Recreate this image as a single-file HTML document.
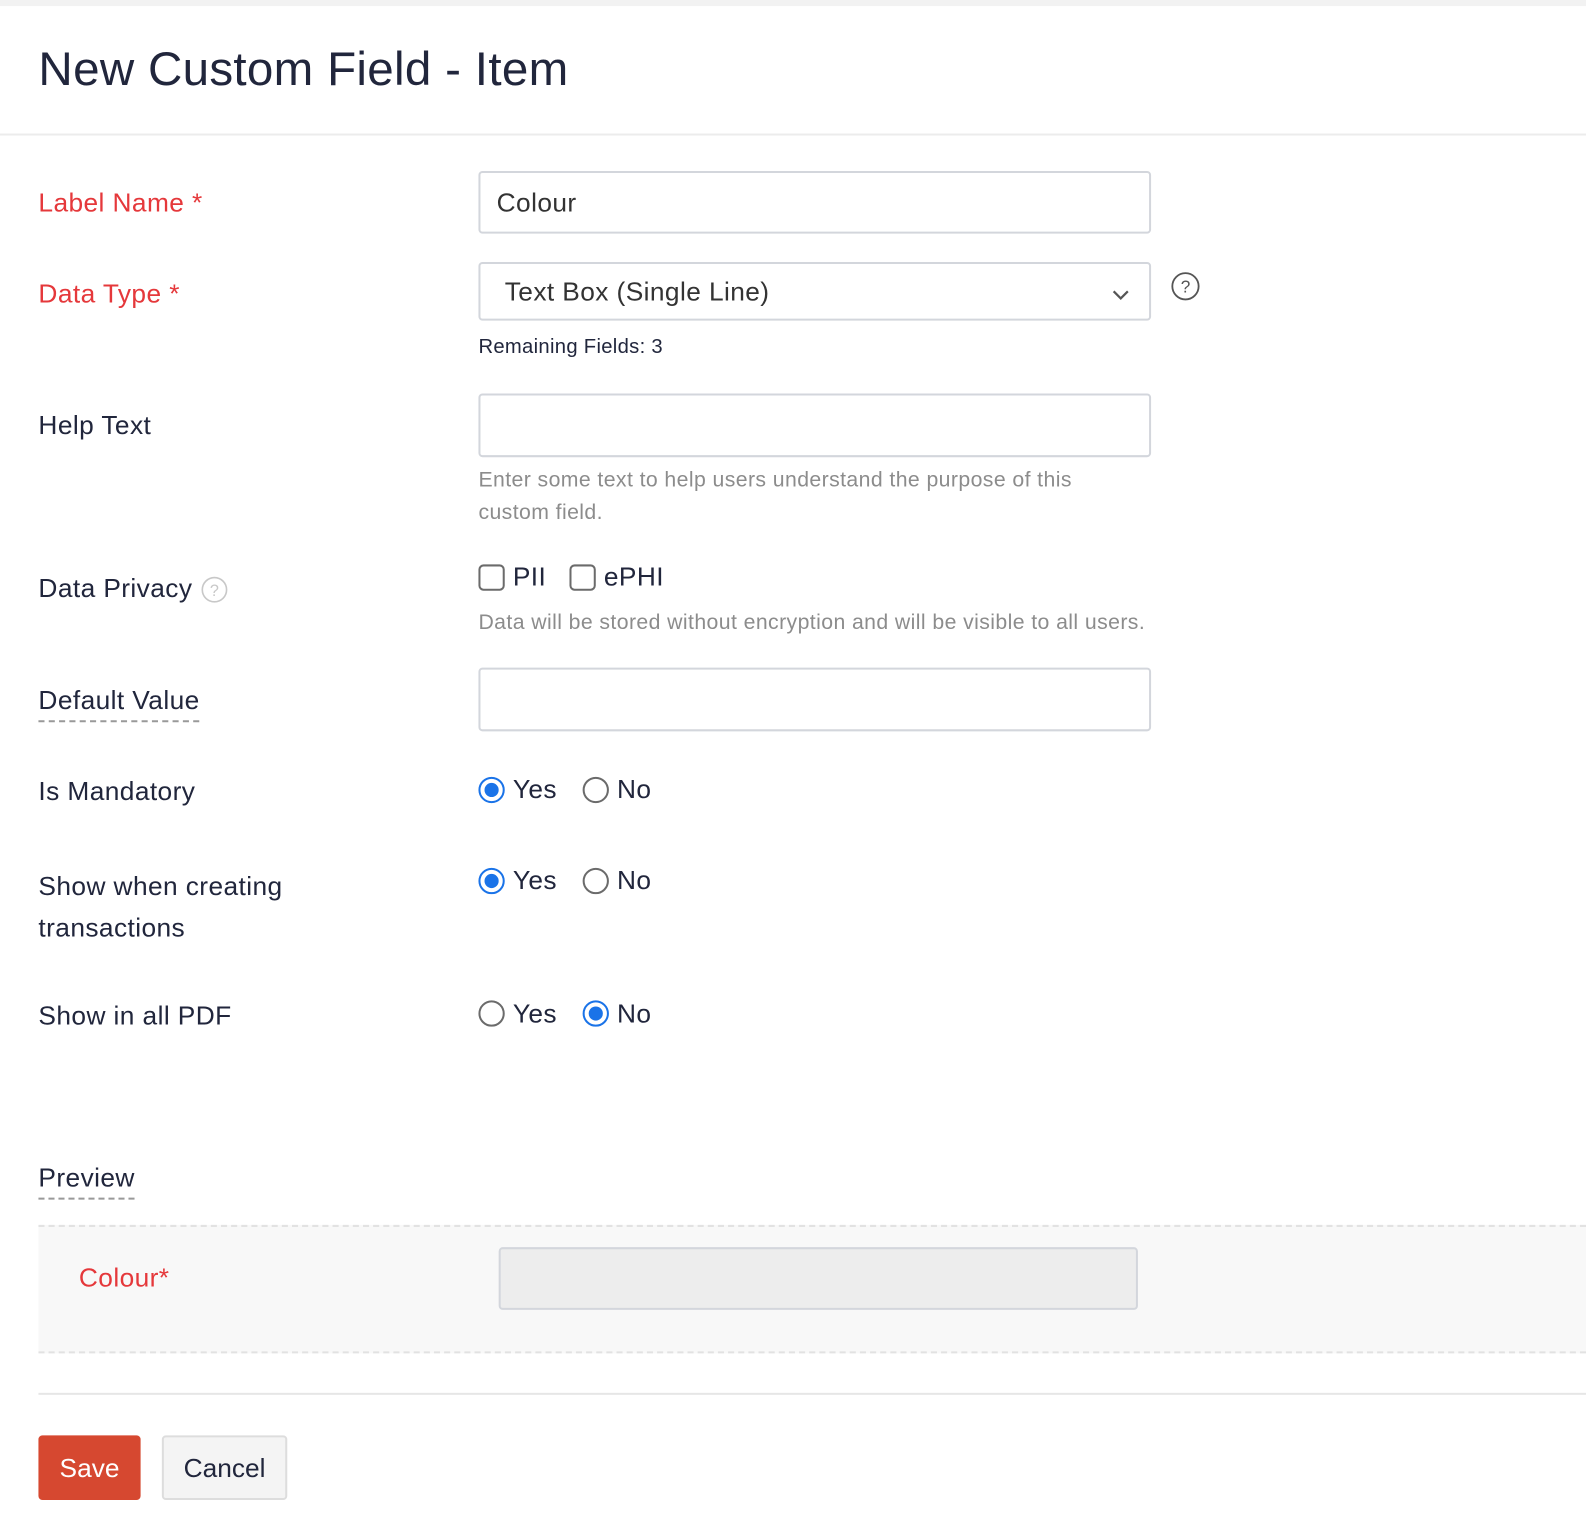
<!DOCTYPE html>
<html><head><meta charset="utf-8"><style>
*{box-sizing:border-box;margin:0;padding:0}
body{width:1586px;height:1530px;background:#fff;font-family:"Liberation Sans",sans-serif;color:#21263c;position:relative;overflow:hidden}
#w{position:absolute;left:0;top:0;width:1568px;height:1513px;transform:scale(1.0115);transform-origin:0 0}
.a{position:absolute;white-space:nowrap}
.lbl{font-size:26px;letter-spacing:0.4px;color:#21263c}
.req{color:#e5383b}
.inp{position:absolute;border:2px solid #d3d6dc;border-radius:4px;background:#fff}
.hint{font-size:21px;letter-spacing:0.4px;color:#8c8c8c}
.rad{position:absolute;width:26px;height:26px;border-radius:50%;border:2px solid #6b6b6b;background:#fff}
.rad.on{border-color:#1a73e8}
.rad.on::after{content:"";position:absolute;left:4px;top:4px;width:14px;height:14px;border-radius:50%;background:#1a73e8}
.cb{position:absolute;width:26px;height:26px;border:2px solid #6b6b6b;border-radius:5px}
.opt{font-size:26px;letter-spacing:0.4px;color:#21263c}
</style></head><body><div id="w">
<div class="a" style="left:0;top:0;width:1568px;height:6px;background:#f2f2f2"></div>
<div class="a" style="left:38px;top:40px;font-size:47px;color:#21263c;letter-spacing:0.3px">New Custom Field - Item</div>
<div class="a" style="left:0;top:132px;width:1568px;height:2px;background:#ececec"></div>

<div class="a lbl req" style="left:38px;top:185px">Label Name *</div>
<div class="inp" style="left:473px;top:169px;width:665px;height:62px"></div>
<div class="a" style="left:491px;top:185px;font-size:26px;letter-spacing:0.4px;color:#333">Colour</div>

<div class="a lbl req" style="left:38px;top:275px">Data Type *</div>
<div class="inp" style="left:473px;top:259px;width:665px;height:58px"></div>
<div class="a" style="left:499px;top:273px;font-size:26px;letter-spacing:0.4px;color:#333">Text Box (Single Line)</div>
<svg class="a" style="left:1098px;top:284px" width="20" height="14" viewBox="0 0 20 14"><path d="M3 4l7 7 7-7" fill="none" stroke="#555" stroke-width="2.2"/></svg>
<svg class="a" style="left:1157px;top:268px" width="30" height="30" viewBox="0 0 30 30"><circle cx="15" cy="15" r="13" fill="none" stroke="#555" stroke-width="1.8"/><text x="15" y="21" font-size="17" text-anchor="middle" fill="#555" font-family="Liberation Sans">?</text></svg>
<div class="a" style="left:473px;top:332px;font-size:20px;letter-spacing:0.3px;color:#21263c">Remaining Fields: 3</div>

<div class="a lbl" style="left:38px;top:405px">Help Text</div>
<div class="inp" style="left:473px;top:389px;width:665px;height:63px"></div>
<div class="a hint" style="left:473px;top:459px;line-height:32px;white-space:normal;width:620px">Enter some text to help users understand the purpose of this custom field.</div>

<div class="a lbl" style="left:38px;top:566px">Data Privacy</div>
<svg class="a" style="left:198px;top:569px" width="28" height="28" viewBox="0 0 28 28"><circle cx="14" cy="14" r="12" fill="none" stroke="#c8c8c8" stroke-width="1.6"/><text x="14" y="20" font-size="16" text-anchor="middle" fill="#c8c8c8" font-family="Liberation Sans">?</text></svg>
<div class="cb" style="left:473px;top:558px"></div>
<div class="a opt" style="left:507px;top:555px">PII</div>
<div class="cb" style="left:563px;top:558px"></div>
<div class="a opt" style="left:597px;top:555px">ePHI</div>
<div class="a hint" style="left:473px;top:604px">Data will be stored without encryption and will be visible to all users.</div>

<div class="a lbl" style="left:38px;top:677px;border-bottom:2px dashed #999;padding-bottom:4px">Default Value</div>
<div class="inp" style="left:473px;top:660px;width:665px;height:63px"></div>

<div class="a lbl" style="left:38px;top:767px">Is Mandatory</div>
<div class="rad on" style="left:473px;top:768px"></div><div class="a opt" style="left:507px;top:765px">Yes</div>
<div class="rad" style="left:576px;top:768px"></div><div class="a opt" style="left:610px;top:765px">No</div>

<div class="a lbl" style="left:38px;top:856px;line-height:41px">Show when creating<br>transactions</div>
<div class="rad on" style="left:473px;top:858px"></div><div class="a opt" style="left:507px;top:855px">Yes</div>
<div class="rad" style="left:576px;top:858px"></div><div class="a opt" style="left:610px;top:855px">No</div>

<div class="a lbl" style="left:38px;top:989px">Show in all PDF</div>
<div class="rad" style="left:473px;top:989px"></div><div class="a opt" style="left:507px;top:987px">Yes</div>
<div class="rad on" style="left:576px;top:989px"></div><div class="a opt" style="left:610px;top:987px">No</div>

<div class="a lbl" style="left:38px;top:1149px;border-bottom:2px dashed #999;padding-bottom:4px">Preview</div>
<div class="a" style="left:38px;top:1211px;width:1530px;height:127px;background:#f8f8f8;border-top:2px dashed #e2e2e2;border-bottom:2px dashed #e2e2e2"></div>
<div class="a req" style="left:78px;top:1248px;font-size:26px;letter-spacing:0.4px">Colour*</div>
<div class="inp" style="left:493px;top:1233px;width:632px;height:62px;background:#ededed"></div>
<div class="a" style="left:38px;top:1377px;width:1530px;height:2px;background:#e6e6e6"></div>

<div class="a" style="left:38px;top:1419px;width:101px;height:64px;background:#d64830;border-radius:4px;color:#fff;font-size:26px;text-align:center;line-height:64px">Save</div>
<div class="a" style="left:160px;top:1419px;width:124px;height:64px;background:#f4f4f4;border:2px solid #ddd;border-radius:4px;color:#21263c;font-size:26px;text-align:center;line-height:60px">Cancel</div>
</div></body></html>
